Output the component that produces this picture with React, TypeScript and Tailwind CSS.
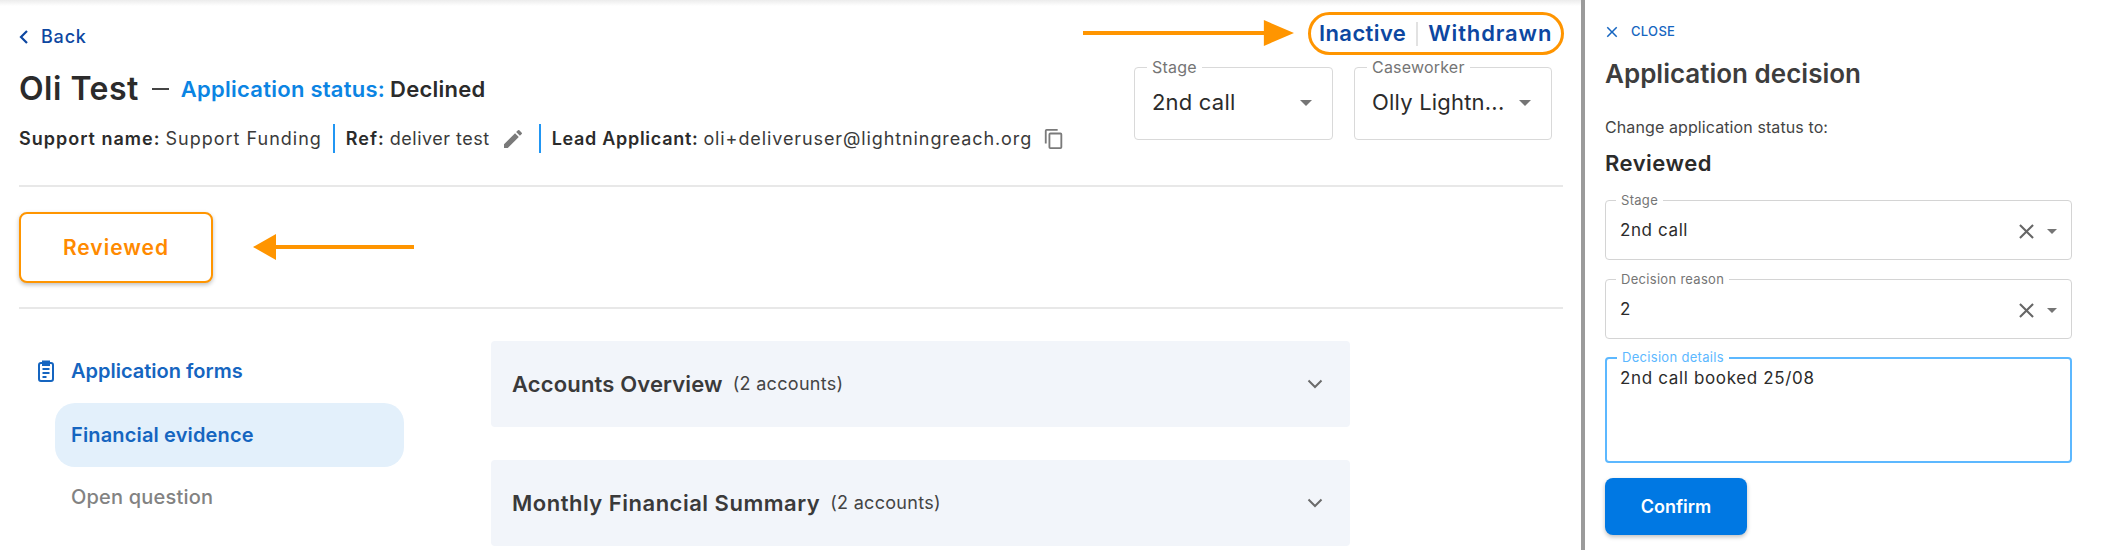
const font = "font-['Inter',sans-serif]";

const CaretDown = ({ className }: { className: string }) => (
  <svg viewBox="0 0 10 5" className={className} fill="currentColor">
    <path d="M0 0l5 5 5-5z" />
  </svg>
);

const CloseIcon = ({ className }: { className: string }) => (
  <svg viewBox="0 0 24 24" className={className} fill="currentColor">
    <path d="M19 6.41 17.59 5 12 10.59 6.41 5 5 6.41 10.59 12 5 17.59 6.41 19 12 13.41 17.59 19 19 17.59 13.41 12z" />
  </svg>
);

const Separator = () => <span className="mx-[11px] h-[29px] w-[2px] shrink-0 bg-[#2196f3]" />;

const Arrow = ({ className, flip }: { className: string; flip?: boolean }) => (
  <svg viewBox="0 0 210 40" preserveAspectRatio="none" className={className} fill="#ff9500">
    {flip ? <path d="M0 20 30 0v17h180v6H30v17z" /> : <path d="M0 17h180V0l30 20-30 20V23H0z" />}
  </svg>
);

const HeaderSelect = ({ label, value, width }: { label: string; value: string; width: string }) => (
  <div className={`relative h-[73px] rounded border border-[#d9d9d9] bg-white pl-[17px] pr-[20px] ${width}`}>
    <span className="absolute -top-[10px] left-[12px] bg-white px-[5px] text-[16px] leading-[18px] tracking-[0.2px] text-[#757575]">{label}</span>
    <div className="flex h-full items-center justify-between pb-[2px]">
      <span className="whitespace-nowrap text-[22px] tracking-[0.2px] text-[#2b2b2b]">{value}</span>
      <CaretDown className="h-[6px] w-[12px] shrink-0 text-[#757575]" />
    </div>
  </div>
);

const Accordion = ({ title, count, tracking }: { title: string; count: string; tracking: string }) => (
  <div className="flex h-[86px] w-[859px] items-center justify-between rounded bg-[#f2f5fa] pl-[21px] pr-[27px]">
    <div className="flex items-baseline gap-[10px]">
      <span className={`text-[22px] font-semibold text-[#3a3a3a] ${tracking}`}>{title}</span>
      <span className="relative -top-[2px] text-[18px] tracking-[0.3px] text-[#444]">{count}</span>
    </div>
    <svg viewBox="0 0 16 10" className="h-[10px] w-[16px]" fill="none" stroke="#6b6b6b" strokeWidth="2">
      <path d="M1.500 1.500 8 8l6.500-6.500" />
    </svg>
  </div>
);

const PanelSelect = ({ label, value, className }: { label: string; value: string; className: string }) => (
  <div className={`relative flex h-[60px] items-start justify-between rounded border border-[#d4d4d4] pl-[14px] pr-[14px] pt-[18px] ${className}`}>
    <span className="absolute -top-[9px] left-[10px] bg-white px-[5px] text-[13px] leading-[16px] tracking-[0.3px] text-[#757575]">{label}</span>
    <span className="text-[17px] leading-[22px] tracking-[0.6px] text-[#2b2b2b]">{value}</span>
    <div className="flex items-center gap-[8px]">
      <CloseIcon className="h-[25px] w-[25px] text-[#666]" />
      <CaretDown className="h-[5px] w-[10px] text-[#757575]" />
    </div>
  </div>
);

export default function App() {
  return (
    <div className={`${font} flex h-[550px] w-[2103px] overflow-hidden bg-white`}>
      <main className="relative h-full w-[1581px] shrink-0 pl-[19px] pr-[18px] pt-[27px]">
        <div className="absolute left-0 right-0 top-0 h-[6px] bg-gradient-to-b from-[#ececec] to-white" />

        <div className="flex h-[160px] items-start justify-between border-b-2 border-[#e8e8e8]">
          <div>
            <div className="flex h-[20px] items-center gap-[12px] text-[18px] font-medium leading-[20px] tracking-[0.8px] text-[#0d47a1]">
              <svg viewBox="0 0 10 16" className="h-[16px] w-[10px]" fill="none" stroke="currentColor" strokeWidth="2.2">
                <path d="M8 2 2 8l6 6" />
              </svg>
              <span>Back</span>
            </div>
            <div className="mt-[22px] flex h-[40px] items-center">
              <span className="text-[32px] font-semibold tracking-[0.5px] text-[#2b2b2b]">Oli Test</span>
              <span className="ml-[13px] h-[2px] w-[17px] bg-[#444]" />
              <span className="ml-[12px] text-[22px] font-semibold tracking-[0.25px] text-[#0b84e3]">Application status:</span>
              <span className="ml-[5px] text-[22px] font-semibold tracking-[0.25px] text-[#2b2b2b]">Declined</span>
            </div>
            <div className="mt-[15px] flex h-[29px] items-center whitespace-nowrap text-[18px] text-[#3a3a3a]">
              <span className="font-semibold tracking-[1px] text-[#2b2b2b]">Support name:</span>
              <span className="ml-[5px] tracking-[1px]">Support Funding</span>
              <Separator />
              <span className="font-semibold tracking-[1px] text-[#2b2b2b]">Ref:</span>
              <span className="ml-[5px] tracking-[0.5px]">deliver test</span>
              <svg viewBox="0 0 24 24" className="ml-[11px] mr-[3px] h-[24px] w-[24px] shrink-0" fill="#7a7a7a">
                <path d="M3 17.250V21h3.750L17.810 9.940l-3.750-3.750zM20.710 7.040a1 1 0 0 0 0-1.410l-2.340-2.340a1 1 0 0 0-1.410 0l-1.830 1.830 3.750 3.750z" />
              </svg>
              <Separator />
              <span className="font-semibold tracking-[0.7px] text-[#2b2b2b]">Lead Applicant:</span>
              <span className="ml-[5px] tracking-[0.9px]">oli+deliveruser@lightningreach.org</span>
              <svg viewBox="0 0 24 24" className="ml-[11px] h-[22px] w-[22px] shrink-0" fill="#7a7a7a">
                <path d="M16 1H4a2 2 0 0 0-2 2v14h2V3h12zm3 4H8a2 2 0 0 0-2 2v14a2 2 0 0 0 2 2h11a2 2 0 0 0 2-2V7a2 2 0 0 0-2-2zm0 16H8V7h11z" />
              </svg>
            </div>
          </div>
          <div className="mr-[11px] flex flex-col items-end">
            <div className="-mr-[12px] -mt-[15px] flex h-[43px] w-[256px] items-center rounded-full border-[3.5px] border-[#ff9500] pl-[8px] text-[22px] font-semibold text-[#0d47a1]">
              <span className="tracking-[0.4px]">Inactive</span>
              <span className="mx-[10px] h-[24px] w-[2px] bg-[#e2e2e2]" />
              <span className="tracking-[0.85px]">Withdrawn</span>
            </div>
            <div className="mt-[12px] flex gap-[21px]">
              <HeaderSelect label="Stage" value="2nd call" width="w-[199px]" />
              <HeaderSelect label="Caseworker" value="Olly Lightn..." width="w-[198px]" />
            </div>
          </div>
        </div>

        <div className="h-[122px] border-b-2 border-[#e8e8e8] pt-[25px]">
          <div className="flex h-[71px] w-[194px] items-center justify-center rounded-[8px] border-2 border-[#ff9500] bg-white text-[21px] font-semibold tracking-[1px] text-[#ff8a00] shadow-[0_2px_4px_rgba(0,0,0,0.25)]">
            Reviewed
          </div>
        </div>

        <div className="mt-[32px] flex">
          <nav className="w-[472px] shrink-0 pl-[18px] pt-[17px]">
            <div className="flex h-[26px] items-center gap-[13px] text-[20px] font-semibold text-[#1565c0]">
              <svg viewBox="0 0 24 24" className="-ml-[3px] h-[26px] w-[24px]" fill="none" stroke="currentColor" strokeWidth="2">
                <rect x="5" y="4" width="14" height="18" rx="2" />
                <path d="M9 2.500h6v3.500H9zM8.500 10h7M8.500 14h7M8.500 18h4" />
              </svg>
              <span>Application forms</span>
            </div>
            <div className="ml-[18px] mt-[19px] flex h-[64px] w-[349px] items-center rounded-[20px] bg-[#e3f0fb] pl-[16px] text-[20px] font-semibold tracking-[0.15px] text-[#1565c0]">
              Financial evidence
            </div>
            <div className="ml-[34px] mt-[18px] text-[20px] font-medium leading-[24px] tracking-[0.2px] text-[#828282]">Open question</div>
          </nav>
          <div className="flex flex-col gap-[33px]">
            <Accordion title="Accounts Overview" count="(2 accounts)" tracking="tracking-[0.15px]" />
            <Accordion title="Monthly Financial Summary" count="(2 accounts)" tracking="tracking-[0.5px]" />
          </div>
        </div>

        <Arrow className="absolute left-[1083px] top-[20px] h-[26px] w-[211px]" />
        <Arrow flip className="absolute left-[253px] top-[234px] h-[26px] w-[161px]" />
      </main>

      <div className="h-full w-[4px] shrink-0 bg-[#9b9b9b]" />

      <aside className="flex-1 pl-[20px] pr-[31px] pt-[23px]">
        <div className="flex h-[18px] items-center gap-[10px] text-[13px] font-medium tracking-[0.3px] text-[#1565c0]">
          <CloseIcon className="h-[18px] w-[18px] -ml-[2px]" />
          <span>CLOSE</span>
        </div>
        <h1 className="mt-[18px] text-[26px] font-semibold leading-[30px] text-[#3d3d3d]">Application decision</h1>
        <p className="mt-[27px] text-[16px] leading-[22px] tracking-[0.1px] text-[#444]">Change application status to:</p>
        <p className="mt-[12px] text-[22px] font-semibold leading-[26px] tracking-[0.5px] text-[#2b2b2b]">Reviewed</p>
        <PanelSelect label="Stage" value="2nd call" className="mt-[24px]" />
        <PanelSelect label="Decision reason" value="2" className="mt-[19px]" />
        <div className="relative mt-[18px] h-[106px] rounded border-2 border-[#5cb8ff] pl-[13px] pt-[8px] text-[17px] leading-[22px] tracking-[0.65px] text-[#2b2b2b]">
          <span className="absolute -top-[10px] left-[10px] bg-white px-[5px] text-[13px] leading-[16px] tracking-[0.3px] text-[#5cb8ff]">Decision details</span>
          2nd call booked 25/08
        </div>
        <button className="mt-[15px] h-[57px] w-[142px] rounded-[8px] bg-[#0078e3] text-[18px] font-semibold text-white shadow-[0_2px_4px_rgba(0,0,0,0.25)]">
          Confirm
        </button>
      </aside>
    </div>
  );
}
